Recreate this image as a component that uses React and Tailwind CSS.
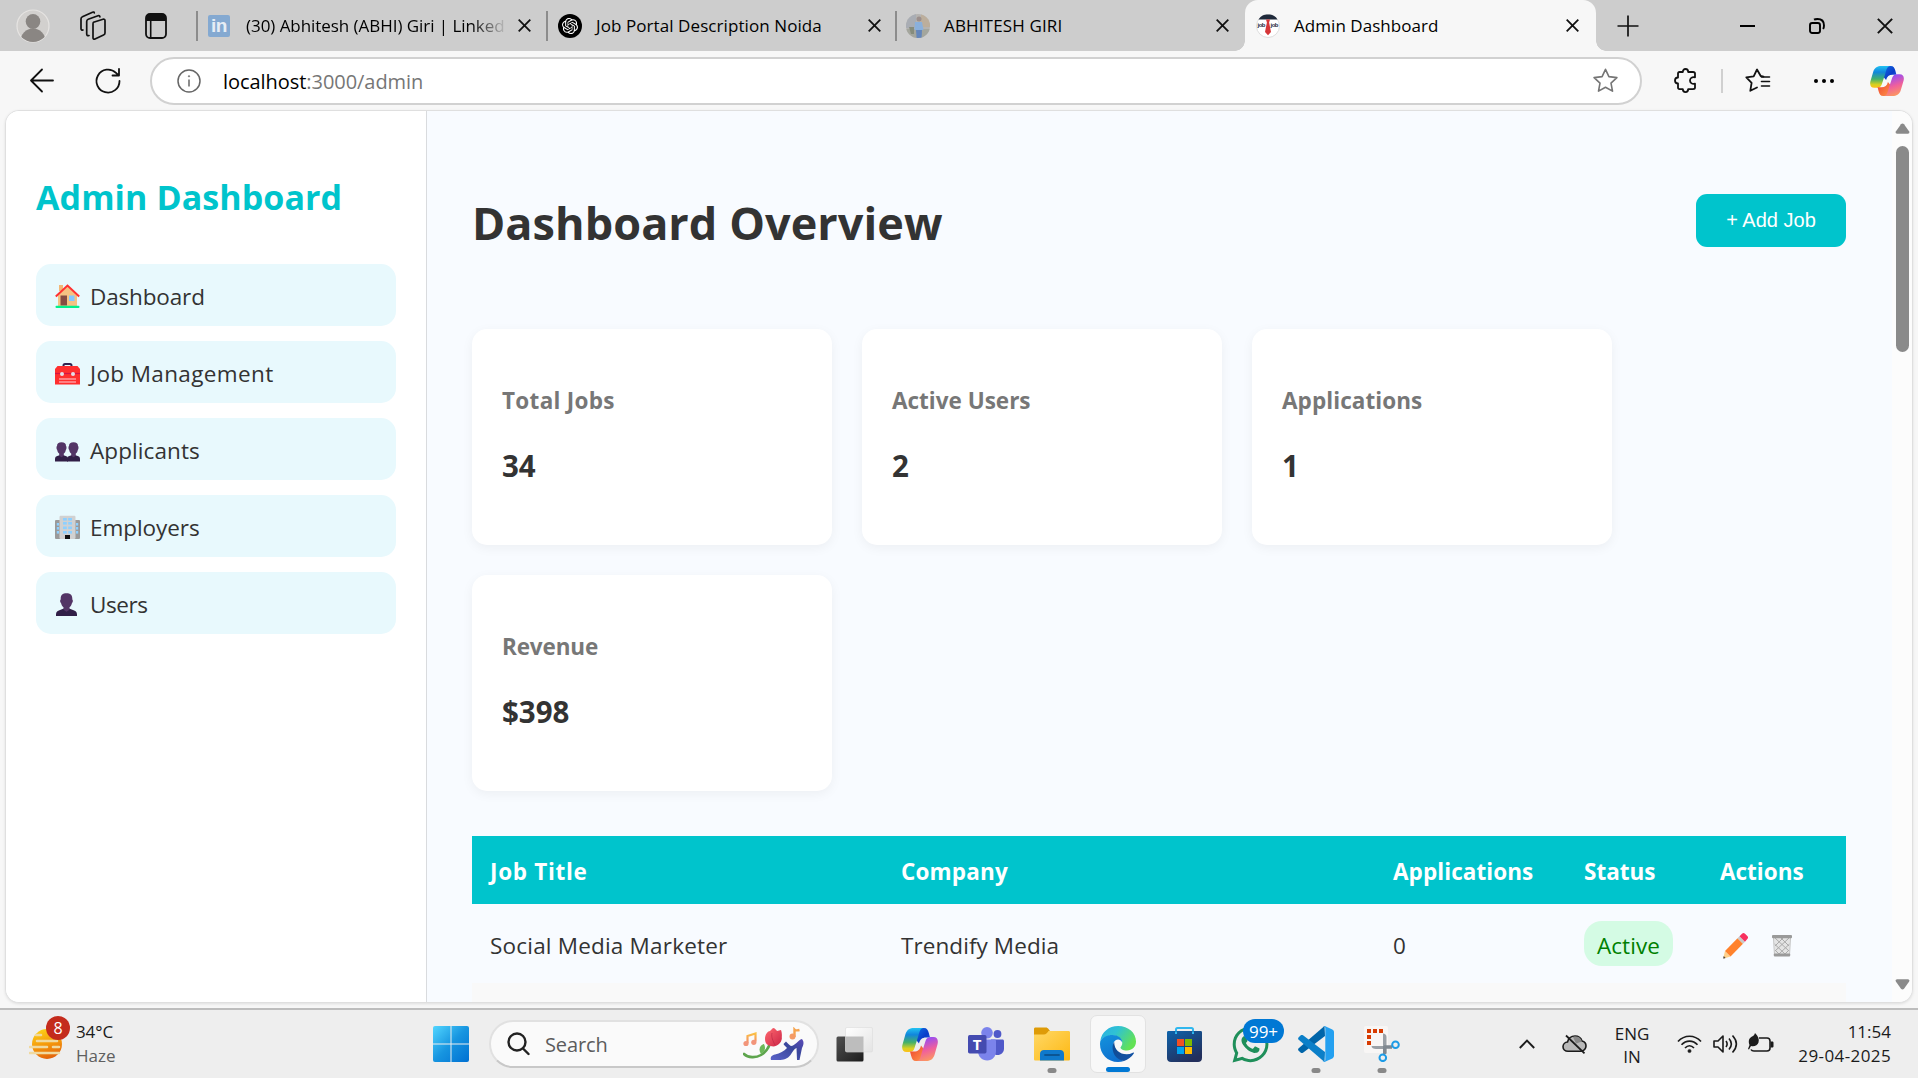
import React from "react";
import { FaWhatsapp } from "react-icons/fa";
import { SiOpenai } from "react-icons/si";

/* ---------- shared glyphs ---------- */

function Cross({ size = 13, stroke = 1.8 }) {
  return (
    <svg width={size} height={size} viewBox="0 0 13 13" fill="none" stroke="#111" strokeWidth={stroke}>
      <path d="M.7.7 12.3 12.3M12.3.7.7 12.3" />
    </svg>
  );
}

function CopilotIcon({ id, width, height }) {
  return (
    <svg width={width} height={height} viewBox="0 0 36 33" preserveAspectRatio="none">
      <defs>
        <linearGradient id={id + "a"} x1="0" y1="0" x2="0" y2="1">
          <stop offset="0" stopColor="#22c3f2" />
          <stop offset=".28" stopColor="#1186dc" />
          <stop offset=".6" stopColor="#44b06a" />
          <stop offset=".85" stopColor="#d8d020" />
          <stop offset="1" stopColor="#ffc01c" />
        </linearGradient>
        <linearGradient id={id + "b"} x1="0" y1="0" x2="1" y2="1">
          <stop offset="0" stopColor="#1272e6" />
          <stop offset=".6" stopColor="#0b3cc8" />
          <stop offset="1" stopColor="#2563e8" />
        </linearGradient>
        <linearGradient id={id + "c"} x1=".3" y1="1" x2="0" y2="0">
          <stop offset="0" stopColor="#9a4df0" />
          <stop offset=".45" stopColor="#f0609c" />
          <stop offset="1" stopColor="#ffa94e" />
        </linearGradient>
        <linearGradient id={id + "d"} x1="0" y1="0" x2="1" y2="1">
          <stop offset="0" stopColor="#ff9a4a" />
          <stop offset="1" stopColor="#ee3f2e" />
        </linearGradient>
      </defs>
      <path d="M13 0h9c3 0 4 2 4.8 5L28 9.500h-4c-4 0-6 2-7 6l-4-5z" fill={`url(#${id}b)`} />
      <path d="M21.500 0C18 0 17.500 4 16 9l-3.500 11C11.500 23 10 24 7 24H4.500C1 24-.5 21 .4 17L3.500 6C5 1.500 8 0 12 0z" fill={`url(#${id}a)`} />
      <g transform="rotate(180 18 16.500)">
        <path d="M13 0h9c3 0 4 2 4.800 5L28 9.500h-4c-4 0-6 2-7 6l-4-5z" fill={`url(#${id}d)`} />
        <path d="M21.500 0C18 0 17.500 4 16 9l-3.500 11C11.500 23 10 24 7 24H4.500C1 24-.5 21 .4 17L3.500 6C5 1.500 8 0 12 0z" fill={`url(#${id}c)`} />
      </g>
    </svg>
  );
}

/* ---------- browser chrome ---------- */

function Avatar() {
  return (
    <svg width="34" height="34" viewBox="0 0 34 34">
      <defs>
        <clipPath id="av"><circle cx="17" cy="17" r="16" /></clipPath>
      </defs>
      <circle cx="17" cy="17" r="16" fill="#d2d0ce" stroke="#e6e4e2" strokeWidth="1.2" />
      <g clipPath="url(#av)" fill="#8a8683">
        <ellipse cx="17" cy="12.500" rx="7.300" ry="7.500" />
        <circle cx="17" cy="32" r="12.500" />
      </g>
    </svg>
  );
}

function WorkspacesIcon() {
  return (
    <svg width="27" height="30" viewBox="0 0 27 30" fill="none" stroke="#111" strokeWidth="1.700" strokeLinejoin="round" strokeLinecap="round">
      <path d="M13.500 11.200 23 8.200c1.200-.3 2 .2 2 1.500v12.200c0 1-.5 1.700-1.500 2.100l-8.500 4c-1.200.5-2 0-2-1.200V13c0-1 0-1.500.5-1.800z" />
      <path d="M9 24.500c-1.500.5-2.300 0-2.300-1.500V10.500c0-1 .5-1.800 1.500-2.200L18 4.700c1-.3 1.800 0 1.900 1.200" />
      <path d="M3 19c-1.300.2-2-.4-2-1.600V8c0-1 .4-1.800 1.400-2.200L12.500 1.200c1-.4 1.700-.1 1.800.8" />
    </svg>
  );
}

function TabActionsIcon() {
  return (
    <svg width="22" height="26" viewBox="0 0 22 26">
      <rect x="1" y="1" width="20" height="24" rx="4" fill="none" stroke="#111" strokeWidth="1.800" />
      <path d="M1 8V5a4 4 0 0 1 4-4h12a4 4 0 0 1 4 4v3z" fill="#111" />
      <path d="M5.700 8v17" stroke="#111" strokeWidth="1.600" />
    </svg>
  );
}

function LinkedInIcon() {
  return (
    <span className="mr-[2px] flex h-[22px] w-[22px] items-center justify-center rounded-[2px] bg-[#84a9d1] font-['Liberation_Sans'] text-[19px] leading-none font-bold tracking-[-0.5px] text-[#e6edf5]">
      in
    </span>
  );
}

function OpenAiIcon() {
  return (
    <span className="flex h-6 w-6 items-center justify-center rounded-full bg-black">
      <SiOpenai size={16} color="#fff" />
    </span>
  );
}

function PortfolioIcon() {
  return (
    <svg width="24" height="24" viewBox="0 0 24 24">
      <defs>
        <clipPath id="pf"><circle cx="12" cy="12" r="12" /></clipPath>
      </defs>
      <g clipPath="url(#pf)">
        <rect width="24" height="24" fill="#b5b3b0" />
        <rect width="10" height="14" fill="#a9adb4" />
        <rect x="15" width="9" height="13" fill="#bcae9c" />
        <rect y="15" width="24" height="9" fill="#a4a69d" />
        <circle cx="13" cy="5" r="2.500" fill="#9c8f8c" />
        <path d="M9 8h7l1.500 8h-9z" fill="#8ab0dc" />
        <path d="M10 16h6l-.4 8h-5z" fill="#6486bb" />
        <path d="M3 13h5v7H5z" fill="#868c7c" />
      </g>
    </svg>
  );
}

function JobIcon() {
  return (
    <svg width="24" height="24" viewBox="0 0 24 24">
      <circle cx="12" cy="12" r="11.500" fill="#fff" stroke="#d5d5d5" strokeWidth=".8" />
      <path d="M2.500 5.500C5 1.500 8 .4 12 .4s7 1.100 9.500 5.100z" fill="#202a3b" />
      <path d="M10 5.500h4l-.9 3L15 18l-3 3.200L9 18l1.900-9.500z" fill="#d63638" />
      <text x="1.500" y="13" fontSize="6" fontWeight="700" fontFamily="Liberation Sans" fill="#202a3b" textLength="8">job</text>
      <text x="14.500" y="13" fontSize="6" fontWeight="700" fontFamily="Liberation Sans" fill="#202a3b" textLength="8">job</text>
    </svg>
  );
}

function Tab({ icon, title, titleClass = "", className = "pl-[10px]" }) {
  return (
    <div className={`flex h-[51px] items-center ${className}`}>
      <div className="flex w-6 shrink-0 justify-center">{icon}</div>
      <div className={`ml-[14px] h-6 w-[258px] shrink-0 text-[17px] leading-6 whitespace-nowrap ${titleClass}`}>{title}</div>
      <div className="ml-[14px] flex shrink-0"><Cross /></div>
    </div>
  );
}

function TabStrip() {
  return (
    <div className="flex h-[51px] shrink-0 items-center bg-[#cdcdcd]">
      <div className="ml-4 flex h-[51px] w-[180px] items-center">
        <Avatar />
        <span className="ml-[30px]"><WorkspacesIcon /></span>
        <span className="ml-[38px]"><TabActionsIcon /></span>
      </div>
      <div className="h-[30px] w-[2px] shrink-0 bg-[#8c8c8c]" />
      <Tab
        className="w-[348px] shrink-0 pl-[10px]"
        icon={<LinkedInIcon />}
        title="(30) Abhitesh (ABHI) Giri | Linked"
        titleClass="tracking-[-0.05px] [mask-image:linear-gradient(to_right,black_225px,transparent_262px)]"
      />
      <div className="h-[30px] w-[2px] shrink-0 bg-[#8c8c8c]" />
      <Tab className="w-[347px] shrink-0 pl-[10px]" icon={<OpenAiIcon />} title="Job Portal Description Noida" titleClass="tracking-[0.08px]" />
      <div className="h-[30px] w-[2px] shrink-0 bg-[#8c8c8c]" />
      <Tab className="w-[348px] shrink-0 pl-[9px]" icon={<PortfolioIcon />} title="ABHITESH GIRI" titleClass="tracking-[0.15px]" />
      <div className="relative w-[351px] shrink-0 rounded-t-[13px] bg-[#f7f7f7]">
        <div className="absolute bottom-0 -left-[10px] h-[10px] w-[10px] bg-[radial-gradient(circle_at_0_0,#cdcdcd_9.500px,#f7f7f7_10px)]" />
        <div className="absolute -right-[10px] bottom-0 h-[10px] w-[10px] bg-[radial-gradient(circle_at_100%_0,#cdcdcd_9.500px,#f7f7f7_10px)]" />
        <Tab className="pl-[11px]" icon={<JobIcon />} title="Admin Dashboard" titleClass="tracking-[0.05px]" />
      </div>
      <svg className="ml-[21px]" width="22" height="22" viewBox="0 0 22 22" stroke="#111" strokeWidth="1.700">
        <path d="M11 .5v21M.5 11h21" />
      </svg>
      <div className="ml-[101px] h-[2px] w-[15px] bg-black" />
      <svg className="ml-[54px]" width="16" height="16" viewBox="0 0 16 16" fill="none" stroke="#000" strokeWidth="1.900">
        <rect x="1" y="5" width="10" height="10" rx="2.200" />
        <path d="M5 1.600C6 1 7 1 8.500 1 12.500 1 15 3.500 15 7.500c0 1.400-.2 2.500-.9 3.500" />
      </svg>
      <span className="ml-[52px]"><Cross size={16} stroke={1.6} /></span>
    </div>
  );
}

function Toolbar() {
  return (
    <div className="flex h-[59px] shrink-0 items-center bg-[#f7f7f7]">
      <svg className="ml-[29px]" width="26" height="26" viewBox="0 0 26 26" fill="none" stroke="#111" strokeWidth="1.800" strokeLinecap="round" strokeLinejoin="round">
        <path d="M24 12.500H2M13 1.500 2 12.500l11 11" />
      </svg>
      <svg className="ml-[39px]" width="28" height="28" viewBox="0 0 28 28" fill="none" stroke="#111" strokeWidth="1.800" strokeLinecap="round" strokeLinejoin="round">
        <path d="M25.500 14A11.500 11.500 0 1 1 22 5.800l2.500 2.400M25 2v6.500h-6.500" />
      </svg>
      <div className="ml-7 flex h-[48px] w-[1492px] items-center rounded-full border-2 border-[#d1d1d1] bg-white">
        <svg className="ml-[25px]" width="24" height="24" viewBox="0 0 24 24" fill="none" stroke="#666" strokeWidth="1.500">
          <circle cx="12" cy="12" r="11" />
          <path d="M12 10.500v7" />
          <circle cx="12" cy="7.300" r=".7" fill="#666" strokeWidth=".6" />
        </svg>
        <div className="ml-[22px] pt-[2px] text-[20px] leading-7 tracking-[-0.05px] text-[#767676]">
          <span className="text-black">localhost</span>:3000/admin
        </div>
        <svg className="mr-[22px] ml-auto" width="25" height="25" viewBox="0 0 25 25" fill="none" stroke="#757575" strokeWidth="1.600" strokeLinejoin="round">
          <path d="m12.500 1.300 3.400 7.300 8 1-5.900 5.500 1.500 8-7-3.900-7 3.900 1.500-8L1.100 9.600l8-1z" />
        </svg>
      </div>
      <svg className="ml-[32px]" width="23" height="25" viewBox="0 0 23 25" fill="none" stroke="#111" strokeWidth="1.800" strokeLinejoin="round">
        <path d="M4 5.500c0-1 .5-1.500 1.500-1.500h3.300c0-2 1-3 2.700-3s2.700 1 2.700 3H19c1.300 0 2 .6 2 1.600v3.700c-3.300-.5-5 1-5 3.200s1.700 3.700 5 3.200v3.800c0 1-.7 1.600-2 1.600h-4.800c0 2-1 3-2.700 3s-2.700-1-2.700-3H5.500C4.500 21.100 4 20.500 4 19.500v-4c-2 0-3-1-3-3s1-3 3-3z" />
      </svg>
      <div className="ml-[24px] h-6 w-[2px] bg-[#d0d0d0]" />
      <svg className="ml-[22px]" width="26" height="25" viewBox="0 0 26 25" fill="none" stroke="#111" strokeWidth="1.800" strokeLinejoin="round" strokeLinecap="round">
        <path d="M18.500 8.600 15.700 8 12 1.500 8.700 8.300 1.300 9.400l5.300 5.400-1.300 8L12 19.500" />
        <path d="M16.500 8.500h8M16.500 13h8M16.500 17.500h8" transform="translate(0 .5)" strokeWidth="1.600" />
      </svg>
      <div className="ml-[43px] flex gap-1">
        <i className="h-1 w-1 rounded-full bg-black" />
        <i className="h-1 w-1 rounded-full bg-black" />
        <i className="h-1 w-1 rounded-full bg-black" />
      </div>
      <span className="ml-[36px]"><CopilotIcon id="ct" width={34} height={30} /></span>
    </div>
  );
}

/* ---------- page icons ---------- */

function HouseIcon() {
  return (
    <svg width="25" height="25" viewBox="0 0 25 25">
      <path d="M4 1h4v6H4z" fill="#f3b877" />
      <path d="M12.500 2 22 11v11H3V11z" fill="#f5c283" />
      <path d="M.8 12.500 12.500 1.500l11.700 11" fill="none" stroke="#ff3131" strokeWidth="2" />
      <rect x="5.500" y="11.500" width="6.500" height="10" fill="#864c42" />
      <rect x="14" y="11.500" width="5.500" height="5.500" fill="#83c7ff" />
      <rect x=".5" y="21.700" width="24" height="2.300" rx="1" fill="#00f28b" />
    </svg>
  );
}

function ToolboxIcon() {
  return (
    <svg width="25" height="25" viewBox="0 0 25 25">
      <path d="M8.500 6V4.500c0-.8.5-1.500 1.500-1.500h5c1 0 1.500.7 1.500 1.500V6" fill="none" stroke="#33234f" strokeWidth="2" />
      <path d="M2.500 5h20L25 8v15.500H0V8z" fill="#ff2f2f" />
      <path d="M0 12.500h25" stroke="#d31446" strokeWidth="1.200" />
      <circle cx="7" cy="13" r="2" fill="#e4dfe8" />
      <circle cx="18" cy="13" r="2" fill="#e4dfe8" />
      <path d="M4 18h17M4 21h17" stroke="#ff9a9f" strokeWidth="1.300" />
    </svg>
  );
}

function PeopleIcon() {
  return (
    <svg width="25" height="25" viewBox="0 0 25 25">
      <g id="person">
        <path d="M0 23.500v-2.600c0-1.800 1-2.700 3-3.200l3.500-1.200 3.500 1.200c2 .5 3 1.400 3 3.200v2.600z" fill="#311f47" />
        <path d="M2 8c0-2.400 1.500-3.700 4.500-3.700S11 5.600 11 8c.7.300.8 3-.2 4-.3 1.800-1 2.800-2 3.500v2.300l-2.300 1.400-2.300-1.400v-2.300c-1-.7-1.700-1.700-2-3.500-1-1-.9-3.700-.2-4z" fill="#533566" />
      </g>
      <use href="#person" x="12" />
    </svg>
  );
}

function OfficeIcon() {
  return (
    <svg width="25" height="25" viewBox="0 0 25 25">
      <rect y="5" width="25" height="19" rx="1" fill="#9a9a9a" />
      <rect x="4.500" y=".8" width="16" height="23.200" rx="1.200" fill="#d1d1d1" />
      <g fill="#8ed0ff">
        {[3, 7, 11.500, 16].map((y) => (
          <React.Fragment key={y}>
            <rect x="8" y={y} width="3.800" height="2.600" />
            <rect x="13.200" y={y} width="3.800" height="2.600" />
          </React.Fragment>
        ))}
        {[8, 12, 16].map((y) => (
          <React.Fragment key={y}>
            <rect x="1.800" y={y} width="2.200" height="2.600" />
            <rect x="21" y={y} width="2.200" height="2.600" />
          </React.Fragment>
        ))}
      </g>
      <path d="M10 24v-4h5v4z" fill="#111" />
    </svg>
  );
}

function PersonIcon() {
  return (
    <svg width="25" height="25" viewBox="0 0 25 25">
      <path d="M1 24v-1.500c0-2.500 1.500-3.700 4-4.500l6.500-2.500L18 18c2.500.8 4 2 4 4.500V24z" fill="#311f47" />
      <path d="M5.700 6.500c0-3.500 2-5.200 5.800-5.200s5.800 1.700 5.800 5.200v1c.8.300.8 3-.3 3.500-.4 2-1.200 3.300-2.500 4.300v2.500l-3 2-3-2v-2.500C7.200 14.300 6.400 13 6 11c-1.100-.5-1.100-3.200-.3-3.500z" fill="#533566" />
    </svg>
  );
}

function PencilIcon() {
  return (
    <svg width="26" height="27" viewBox="0 0 26 27">
      <path d="m2 19 5.500 5.500-6.500 2c-.6 0-.8-.5-.6-1z" fill="#ffd08a" />
      <path d="m.8 24 1.800 2-1.600.6c-.6.100-.9-.4-.7-.9z" fill="#444" />
      <path d="M14.500 6.200 20 11.700 7.500 24.500 2 19z" fill="#ff822d" />
      <path d="m14.500 6.200 2-2L22 9.700l-2 2z" fill="#c8c8c8" />
      <path d="m16.500 4.200 2.500-2.500c1-1 2-1 3 0l2.300 2.300c1 1 1 2 0 3L22 9.700z" fill="#f8305f" />
    </svg>
  );
}

function TrashIcon() {
  return (
    <svg width="20" height="22" viewBox="0 0 20 22">
      <path d="M2 3h16l-1 17H3z" fill="#e4e4e4" />
      <path d="m3 3 14 13M9 3l8 8M2.500 9 13 19M3 15l5 5M17 3 3 16M11 3 3 11M17.500 9 7 19M17 15l-5 5" stroke="#aaa" strokeWidth="1" />
      <path d="m1.500 2.500 1 18h15l1-18" fill="none" stroke="#c2c2c2" strokeWidth="1" />
      <rect width="20" height="3.200" rx="1" fill="#9a9a9a" />
      <rect x="1.800" y="18.600" width="16.400" height="3" rx="1" fill="#9a9a9a" />
    </svg>
  );
}

/* ---------- page ---------- */

const nav = [
  { label: "Dashboard", icon: <HouseIcon />, spacing: "tracking-[-0.15px]" },
  { label: "Job Management", icon: <ToolboxIcon />, spacing: "tracking-[0.37px]" },
  { label: "Applicants", icon: <PeopleIcon />, spacing: "tracking-[0.1px]" },
  { label: "Employers", icon: <OfficeIcon />, spacing: "tracking-[-0.05px]" },
  { label: "Users", icon: <PersonIcon />, spacing: "tracking-[-0.4px]" },
];

const stats = [
  { label: "Total Jobs", value: "34", spacing: "tracking-[0.3px]" },
  { label: "Active Users", value: "2", spacing: "tracking-normal" },
  { label: "Applications", value: "1", spacing: "tracking-[0.08px]" },
  { label: "Revenue", value: "$398", spacing: "tracking-[-0.15px]" },
];

function Sidebar() {
  return (
    <aside className="w-[421px] shrink-0 border-r border-[#d9dbde] bg-white pt-[62px] pl-[30px]">
      <h2 className="text-[34px] leading-[48px] font-bold tracking-[0.08px] text-[#00c4cc]">Admin Dashboard</h2>
      <nav className="mt-[43px] flex w-[360px] flex-col gap-[15px]">
        {nav.map((n) => (
          <a key={n.label} className="flex h-[62px] items-center rounded-[15px] bg-[#e8f9fd] pl-[19px] text-[22.500px] text-[#333]">
            <span className="mt-[3px]">{n.icon}</span>
            <span className={`ml-[10px] pt-[4px] ${n.spacing}`}>{n.label}</span>
          </a>
        ))}
      </nav>
    </aside>
  );
}

function JobsTable() {
  const cols = "grid grid-cols-[411px_492px_191px_136px_144px] items-center *:pl-[18px]";
  return (
    <div className="mt-[45px] w-[1374px] text-[22.500px] text-[#333]">
      <div className={`${cols} h-[68px] bg-[#00c4cc] pt-[4px] font-bold text-white`}>
        <div className="tracking-[0.7px]">Job Title</div>
        <div className="tracking-[0.15px]">Company</div>
        <div className="tracking-[0.08px]">Applications</div>
        <div>Status</div>
        <div>Actions</div>
      </div>
      <div className={`${cols} h-[79px]`}>
        <div className="pt-[5px] tracking-[0.2px]">Social Media Marketer</div>
        <div className="pt-[5px] tracking-[0.08px]">Trendify Media</div>
        <div className="pt-[5px]">0</div>
        <div>
          <span className="flex h-[45px] w-[89px] items-center justify-center rounded-[18px] bg-[#d4fbe4] pt-[4px] tracking-[0.1px] text-[#008000]">Active</span>
        </div>
        <div className="flex items-center pt-[3px]">
          <span className="ml-[3px]"><PencilIcon /></span>
          <span className="mt-[2px] ml-[23px]"><TrashIcon /></span>
        </div>
      </div>
      <div className="h-[68px] bg-[#f9f9f9]" />
    </div>
  );
}

function Page() {
  return (
    <div className="mr-[5px] ml-[5px] flex h-[893px] shrink-0 overflow-hidden rounded-[14px] border border-[#dfdfdf] bg-[#f8fbff] shadow-[0_1px_3px_rgba(0,0,0,0.1)]">
      <Sidebar />
      <main className="w-[1465px] shrink-0 pt-[83px] pl-[45px]">
        <div className="flex h-[53px] w-[1374px] items-center justify-between">
          <h1 className="mt-[4px] text-[45px] leading-[53px] font-bold tracking-[0.06px] text-[#333]">Dashboard Overview</h1>
          <button className="h-[53px] w-[150px] rounded-[11px] bg-[#00c4cc] pb-[2px] font-['Liberation_Sans'] text-[20px] text-white">+ Add Job</button>
        </div>
        <div className="mt-[82px] flex flex-wrap gap-[30px]">
          {stats.map((s) => (
            <div key={s.label} className="h-[216px] w-[360px] rounded-[15px] bg-white px-[30px] pt-[56px] shadow-[0_3px_12px_rgba(0,0,0,0.05)]">
              <h3 className={`text-[22.500px] leading-8 font-bold text-[#777] ${s.spacing}`}>{s.label}</h3>
              <p className="mt-[29px] text-[29.500px] leading-10 font-bold text-[#333]">{s.value}</p>
            </div>
          ))}
        </div>
        <JobsTable />
      </main>
      <div className="flex w-[20px] grow flex-col items-center bg-[#fcfcfc] pt-[12px]">
        <svg width="15" height="11" viewBox="0 0 15 11"><path d="M6 1.200c.8-1 2.200-1 3 0l5 7c.9 1.300.3 2.500-1.300 2.500H2.300C.7 10.700.1 9.500 1 8.200z" fill="#8a8a8a" /></svg>
        <div className="mt-[12px] h-[206px] w-[13px] rounded-full bg-[#8a8a8a]" />
        <svg className="mt-[627px]" width="15" height="11" viewBox="0 0 15 11"><path d="M6 9.800c.8 1 2.200 1 3 0l5-7C14.900 1.500 14.300.3 12.700.3H2.300C.7.300.1 1.500 1 2.800z" fill="#8a8a8a" /></svg>
      </div>
    </div>
  );
}

/* ---------- taskbar ---------- */

function WeatherIcon() {
  return (
    <svg width="34" height="34" viewBox="0 0 34 34">
      <defs>
        <linearGradient id="sun" x1="0.300" y1="0" x2=".6" y2="1">
          <stop offset="0" stopColor="#fcd116" />
          <stop offset=".5" stopColor="#f59a0c" />
          <stop offset="1" stopColor="#e2600b" />
        </linearGradient>
      </defs>
      <circle cx="18" cy="17" r="15" fill="url(#sun)" />
      <path d="M7 8h5M8 14h20M1 20h17M24 20h6M1 26h29" stroke="#f0d9a0" strokeWidth="2.600" strokeLinecap="round" />
    </svg>
  );
}

function WindowsIcon() {
  return (
    <svg width="36" height="36" viewBox="0 0 36 36">
      <defs>
        <linearGradient id="win" x1="0" y1="0" x2="36" y2="36" gradientUnits="userSpaceOnUse">
          <stop offset="0" stopColor="#52d6ff" />
          <stop offset=".5" stopColor="#1795e0" />
          <stop offset="1" stopColor="#0070d2" />
        </linearGradient>
      </defs>
      <g fill="url(#win)">
        <path d="M2 0h15.500v17.500H0V2a2 2 0 0 1 2-2z" />
        <path d="M18.500 0H34a2 2 0 0 1 2 2v15.500H18.500z" />
        <path d="M0 18.500h17.500V36H2a2 2 0 0 1-2-2z" />
        <path d="M18.500 18.500H36V34a2 2 0 0 1-2 2H18.500z" />
      </g>
    </svg>
  );
}

function DoodleIcon() {
  return (
    <svg width="62" height="34" viewBox="0 0 62 34">
      <defs>
        <linearGradient id="note" x1="0" y1="0" x2="0" y2="1">
          <stop offset="0" stopColor="#fbbf45" />
          <stop offset="1" stopColor="#f28a6d" />
        </linearGradient>
        <linearGradient id="tulip" x1="0" y1="0" x2="1" y2="1">
          <stop offset="0" stopColor="#ff6a70" />
          <stop offset="1" stopColor="#cc2446" />
        </linearGradient>
        <linearGradient id="shoe" x1="0" y1="1" x2="1" y2="0">
          <stop offset="0" stopColor="#5a63c9" />
          <stop offset=".6" stopColor="#3a479c" />
          <stop offset="1" stopColor="#5b4bb8" />
        </linearGradient>
      </defs>
      <path d="M4.500 16V9l8-2.500v8" fill="none" stroke="url(#note)" strokeWidth="2.200" />
      <circle cx="3" cy="16.500" r="2.600" fill="#f2957a" />
      <circle cx="10.800" cy="15.300" r="2.600" fill="#f2957a" />
      <path d="M51.500 10V2.500c1 1 3 1 5 .5" fill="none" stroke="#f5a44e" strokeWidth="2.400" />
      <circle cx="49.500" cy="9.500" r="3" fill="#f49b66" />
      <path d="M1 27c4 4 12 4 17 1 5-3 7-6 9-11" fill="none" stroke="#5ea54d" strokeWidth="2.600" strokeLinecap="round" />
      <path d="M18 27c-3-5-1-9 3-10 2 4 1 7-3 10z" fill="#6cb858" />
      <path d="M22 12c0-5 3-8 5-8l3-3c2 0 3 2 4 3l4-1c1 3 1 5 .8 7 .7 4-3 9-8 9.500C25 19 22 17 22 12z" fill="url(#tulip)" />
      <path d="M29 6c-1 4 1 8 3 12" fill="none" stroke="#b82443" strokeWidth="1" opacity=".6" />
      <path d="M43 14.500c2 2 3.500 3.500 5 4.500 4 0 7-6 11-7 2.500 3 1.500 6 0 9l-2.500 12H54l-.5-12c-2.500 1-4 4-6 7-3 4-7 5-12 5H28c-1-3 1-5 4-5.500 5-1 9-3.500 12-6.500-1-1-3-3-3.500-4z" fill="url(#shoe)" />
    </svg>
  );
}

function TaskViewIcon() {
  return (
    <svg width="37" height="35" viewBox="0 0 37 35">
      <defs>
        <linearGradient id="tv" x1="0" y1="0" x2="1" y2="1">
          <stop offset="0" stopColor="#505050" />
          <stop offset="1" stopColor="#1c1c1c" />
        </linearGradient>
        <linearGradient id="tv2" x1="0" y1="0" x2="1" y2="1">
          <stop offset="0" stopColor="#fff" />
          <stop offset="1" stopColor="#e3e3e3" />
        </linearGradient>
      </defs>
      <rect x=".5" y="9.500" width="27" height="25" rx="1.500" fill="url(#tv)" />
      <rect x="9.500" y=".5" width="27" height="24.500" rx="1.500" fill="url(#tv2)" stroke="#dcdcdc" strokeWidth=".6" />
      <path d="M9.500 9.500h18V25H11a1.500 1.500 0 0 1-1.500-1.500z" fill="#bdbdbd" />
    </svg>
  );
}

function TeamsIcon() {
  return (
    <svg width="36" height="34" viewBox="0 0 36 34">
      <circle cx="29.500" cy="7" r="3.900" fill="#5059c9" />
      <path d="M23 12.500h11.500c.8 0 1.500.7 1.500 1.500v7.500c0 4-3 6.500-6.500 6.500S23 25.500 23 22z" fill="#5059c9" />
      <circle cx="19" cy="5.800" r="5.800" fill="#7b83eb" />
      <path d="M11 12.500h15.500c.9 0 1.500.6 1.500 1.500v10c0 5.500-3.500 9.500-8.800 9.500S10 29.500 10 24V13.500z" fill="#7b83eb" />
      <rect y="8" width="18.500" height="18.500" rx="1.700" fill="#444bb0" />
      <text x="9.200" y="22.800" textAnchor="middle" fontSize="15" fontWeight="700" fontFamily="Open Sans" fill="#fff">T</text>
    </svg>
  );
}

function FolderIcon() {
  return (
    <svg width="36" height="34" viewBox="0 0 36 34">
      <defs>
        <linearGradient id="fo" x1="0" y1="0" x2="1" y2="1">
          <stop offset="0" stopColor="#ffd866" />
          <stop offset="1" stopColor="#fdb813" />
        </linearGradient>
      </defs>
      <path d="M0 2C0 1 .5.500 1.500.500H12c1 0 1.500.5 2.500 1.500l1.500 2v6H0z" fill="#de9b07" />
      <path d="M0 7.500h10c2 0 3-1.500 4.500-3.500H34.500c1 0 1.500.6 1.500 1.500V32c0 1-.6 1.500-1.500 1.500h-33C.6 33.500 0 33 0 32z" fill="url(#fo)" />
      <path d="M6 33.500V27c0-2.500 1.500-4 4-4h16c2.500 0 4 1.500 4 4v6.500z" fill="#0f79cc" />
      <path d="M11 28h14" stroke="#0b5594" strokeWidth="1.800" strokeLinecap="round" />
    </svg>
  );
}

function EdgeIcon() {
  return (
    <svg width="36" height="36" viewBox="0 0 36 36">
      <defs>
        <linearGradient id="e1" x1="0" y1="0" x2="1" y2=".5">
          <stop offset="0" stopColor="#2baee4" />
          <stop offset=".45" stopColor="#2fc2d4" />
          <stop offset="1" stopColor="#62e255" />
        </linearGradient>
        <linearGradient id="e2" x1=".2" y1="0" x2=".6" y2="1">
          <stop offset="0" stopColor="#1391dc" />
          <stop offset="1" stopColor="#0f6fce" />
        </linearGradient>
        <linearGradient id="e3" x1="0" y1="0" x2="1" y2="1">
          <stop offset="0" stopColor="#0f4a90" />
          <stop offset="1" stopColor="#1454a8" />
        </linearGradient>
      </defs>
      <path d="M.3 15C1.500 6 9 0 18 0c10.500 0 18 7 18 15.500 0 5.500-4 9-9 9-4.500 0-6.500-1.500-6.500-3 0-.8 1.800-1.500 1.800-4.500 0-4-4-7.500-9.500-7.500C6.500 9.500 2 12 .3 15z" fill="url(#e1)" />
      <path d="M.2 15.500C2 11.500 6.500 9 12.500 9c5.500 0 9.800 3 9.800 7.500-1-2-2.500-3-4.300-3-3 0-5 3-5 7 0 7 5 12 11 14.500-2 .7-4 1-6 1C7.500 36 0 28 0 18z" fill="url(#e2)" />
      <path d="M14.200 16C11 20 12 33 24 35c4-1.300 7.500-4 9.800-7.500.4-.8-.3-1.200-1-.8-2 1-4 1.500-6 1.500-7.500 0-12.500-4.500-12.600-12.200z" fill="url(#e3)" />
    </svg>
  );
}

function StoreIcon() {
  return (
    <svg width="35" height="35" viewBox="0 0 35 35">
      <defs>
        <linearGradient id="st" x1="0" y1="0" x2=".6" y2="1">
          <stop offset="0" stopColor="#0d63ab" />
          <stop offset="1" stopColor="#232f5c" />
        </linearGradient>
      </defs>
      <path d="M9 7V2.500C9 1.500 9.500 1 10.500 1h14c1 0 1.500.5 1.500 1.500V7" fill="none" stroke="#30b7ee" strokeWidth="2" />
      <path d="M0 5.500C0 4.500.5 4 1.500 4h32c1 0 1.500.5 1.500 1.500V31c0 2.500-1.500 4-4 4H4c-2.500 0-4-1.500-4-4z" fill="url(#st)" />
      <path d="M9 7V4.500M26 7V4.500" stroke="#30b7ee" strokeWidth="2" />
      <rect x="10" y="12" width="7" height="7" fill="#f25022" />
      <rect x="18" y="12" width="7" height="7" fill="#7fba00" />
      <rect x="10" y="20" width="7" height="7" fill="#00a4ef" />
      <rect x="18" y="20" width="7" height="7" fill="#ffb900" />
    </svg>
  );
}

function VsCodeIcon() {
  return (
    <svg width="36" height="36" viewBox="0 0 36 36">
      <path d="M26.500 0 27 10 5 26.700c-.8.500-1.500.5-2.200 0L.7 24.800c-.8-.8-.8-1.800 0-2.500z" fill="#0065a9" />
      <path d="M26.500 36 27 26 5 9.300c-.8-.5-1.500-.5-2.200 0L.7 11.200c-.8.8-.8 1.800 0 2.500z" fill="#0b7fc8" />
      <path d="M26.500 36c-.8 0-1.500-.3-2-1 1.200 1 2.800.3 2.800-1.200V2.200c0-1.500-1.600-2.200-2.800-1.200.6-.8 1.700-1.200 2.800-.8l7 3.300c1 .5 1.700 1.500 1.700 2.700v23.600c0 1.200-.7 2.200-1.700 2.700z" fill="#24a0f0" />
    </svg>
  );
}

function SnipIcon() {
  return (
    <svg width="36" height="36" viewBox="0 0 36 36">
      <rect width="24" height="27" rx="2" fill="#f8f6f5" />
      <g fill="#d83b01">
        <path d="M3 3h4v4H3zM9 3h4v4H9zM15 3h4v4h-4zM3 9h4v4H3zM3 15h4v4H3z" />
      </g>
      <path d="M19 7.500c2 0 3.500 1.500 3.500 3.500v16h-3.500V23H12c-2.500 0-4.500-1-4.500-3H19z" fill="#9aa0a6" />
      <path d="M20 21h8M20.700 20v8" stroke="#808890" strokeWidth="3.400" />
      <circle cx="31.500" cy="18.800" r="3.300" fill="none" stroke="#1c9be6" strokeWidth="2" />
      <circle cx="18.800" cy="31.800" r="3.300" fill="none" stroke="#1c9be6" strokeWidth="2" />
    </svg>
  );
}

function TaskIcon({ children, dot, active }) {
  return (
    <div className={`relative flex h-[58px] w-[56px] shrink-0 items-center justify-center ${active ? "rounded-[7px] border border-[#e2e2e2] bg-[#f8f8f8]" : ""}`}>
      {children}
      {dot && <i className="absolute bottom-0 left-1/2 h-[5px] w-[9px] -translate-x-1/2 rounded-full bg-[#888]" />}
      {active && <i className="absolute bottom-0 left-1/2 h-[5px] w-[24px] -translate-x-1/2 rounded-full bg-[#0078d4]" />}
    </div>
  );
}

function Tray() {
  return (
    <div className="mr-[27px] ml-auto flex h-[68px] items-center text-[17px] leading-6 text-[#1b1b1b]">
      <svg width="16" height="10" viewBox="0 0 16 10" fill="none" stroke="#1b1b1b" strokeWidth="1.900">
        <path d="m.8 9 7.200-7.500L15.200 9" />
      </svg>
      <svg className="ml-[27px]" width="25" height="20" viewBox="0 0 25 20">
        <path d="M6 17.200c-3 0-5-2-5-4.500s2-4.500 4.500-4.700C6.500 4 9.500 2 13 2c3.500 0 6 2 7 5 2.500.5 4 2.500 4 5s-2 5.200-5 5.200z" fill="#b9b9b9" stroke="#1b1b1b" strokeWidth="1.600" />
        <path d="M11 3c4-1.500 8 .5 9 4.500l-6 2z" fill="#888" />
        <path d="m4 1.500 18.500 17.800" stroke="#1b1b1b" strokeWidth="1.800" />
      </svg>
      <div className="ml-[26px] w-[38px] pt-px text-center leading-[23px] whitespace-nowrap"><div>ENG</div><div>IN</div></div>
      <svg className="ml-[26px]" width="25" height="20" viewBox="0 0 25 20" fill="none" stroke="#1b1b1b" strokeWidth="1.700">
        <path d="M1 7.500C7.500.5 17.500.5 24 7.500M4.500 10.800c4.500-5 11.500-5 16 0M8 14c2.800-3 6.200-3 9 0" />
        <circle cx="12.500" cy="17" r="1.600" fill="#1b1b1b" strokeWidth=".6" />
      </svg>
      <svg className="ml-[11px]" width="25" height="20" viewBox="0 0 25 20" fill="none" stroke="#1b1b1b" strokeWidth="1.600">
        <path d="M1 7v6h4l5 5V2L5 7z" strokeLinejoin="round" />
        <path d="M13 7c1.500 2 1.500 4 0 6M16 4.500c3 3.500 3 7.500 0 11M19.500 1.500c5 5.500 5 11.500 0 17" />
      </svg>
      <svg className="mb-[3px] ml-[10px]" width="26" height="22" viewBox="0 0 26 22">
        <path d="M11 6h8c2 0 3 1 3 3v7c0 2-1 3-3 3H6c-1.500 0-2.500-.5-3-1.500" fill="none" stroke="#1b1b1b" strokeWidth="1.600" />
        <path d="M22.500 9.500h1.700c.8 0 1.300.5 1.300 1.300v3.400c0 .8-.5 1.300-1.300 1.300h-1.700z" fill="#1b1b1b" />
        <path d="M7 1c3 3 4.500 6 3.500 9.500-.8 3-4.500 4.500-7.500 3.500L1 17.500l-1-.5 1.500-4C0 9 1 6 4 4.500 5.500 4 6.500 3 7 1z" fill="#1b1b1b" />
      </svg>
      <div className="ml-[23px] w-[94px] text-right whitespace-nowrap"><div>11:54</div><div className="tracking-[0.4px]">29-04-2025</div></div>
    </div>
  );
}

function Taskbar() {
  return (
    <div className="flex h-[70px] shrink-0 items-center border-t-2 border-[#bdbdbd] bg-[#eee]">
      <div className="flex w-[433px] shrink-0 items-center pl-[29px]">
        <div className="relative">
          <WeatherIcon />
          <span className="absolute -top-[11px] left-[17px] flex h-6 w-6 items-center justify-center rounded-full bg-[#c42b1c] text-[16px] leading-none text-white">8</span>
        </div>
        <div className="ml-[13px] text-[17px] leading-6 text-[#1b1b1b]">
          <div className="tracking-[-0.1px]">34°C</div>
          <div className="text-[#5f5f5f]">Haze</div>
        </div>
      </div>
      <WindowsIcon />
      <div className="ml-[20px] flex h-[48px] w-[330px] shrink-0 items-center rounded-full border-2 border-[#e1e1e1] border-b-[#c8c8c8] bg-[#fafafa]">
        <svg className="ml-[15px]" width="24" height="24" viewBox="0 0 24 24" fill="none" stroke="#222" strokeWidth="2.400" strokeLinecap="round">
          <circle cx="11" cy="10" r="8.500" />
          <path d="m17 16.500 5.500 5.500" />
        </svg>
        <span className="ml-[15px] pt-[2px] text-[20px] tracking-[-0.1px] text-[#5c5c5c]">Search</span>
        <span className="mr-[12px] ml-auto"><DoodleIcon /></span>
      </div>
      <div className="ml-[7px] flex gap-[10px]">
        <TaskIcon><TaskViewIcon /></TaskIcon>
        <TaskIcon><CopilotIcon id="cb" width={36} height={33} /></TaskIcon>
        <TaskIcon><TeamsIcon /></TaskIcon>
        <TaskIcon dot><FolderIcon /></TaskIcon>
        <TaskIcon active><EdgeIcon /></TaskIcon>
        <TaskIcon><StoreIcon /></TaskIcon>
        <TaskIcon>
          <FaWhatsapp size={41} color="#1f8f5a" />
          <span className="absolute top-[4px] left-[21px] flex h-[24px] w-[41px] items-center justify-center rounded-full bg-[#0078d4] text-[17px] leading-none text-white">99+</span>
        </TaskIcon>
        <TaskIcon dot><VsCodeIcon /></TaskIcon>
        <TaskIcon dot><SnipIcon /></TaskIcon>
      </div>
      <Tray />
    </div>
  );
}

export default function App() {
  return (
    <div className="flex h-[1078px] w-[1918px] flex-col overflow-hidden bg-[#f7f7f7] font-['Open_Sans','Noto_Sans',sans-serif] text-black">
      <TabStrip />
      <Toolbar />
      <Page />
      <div className="h-[4px] grow" />
      <Taskbar />
    </div>
  );
}
